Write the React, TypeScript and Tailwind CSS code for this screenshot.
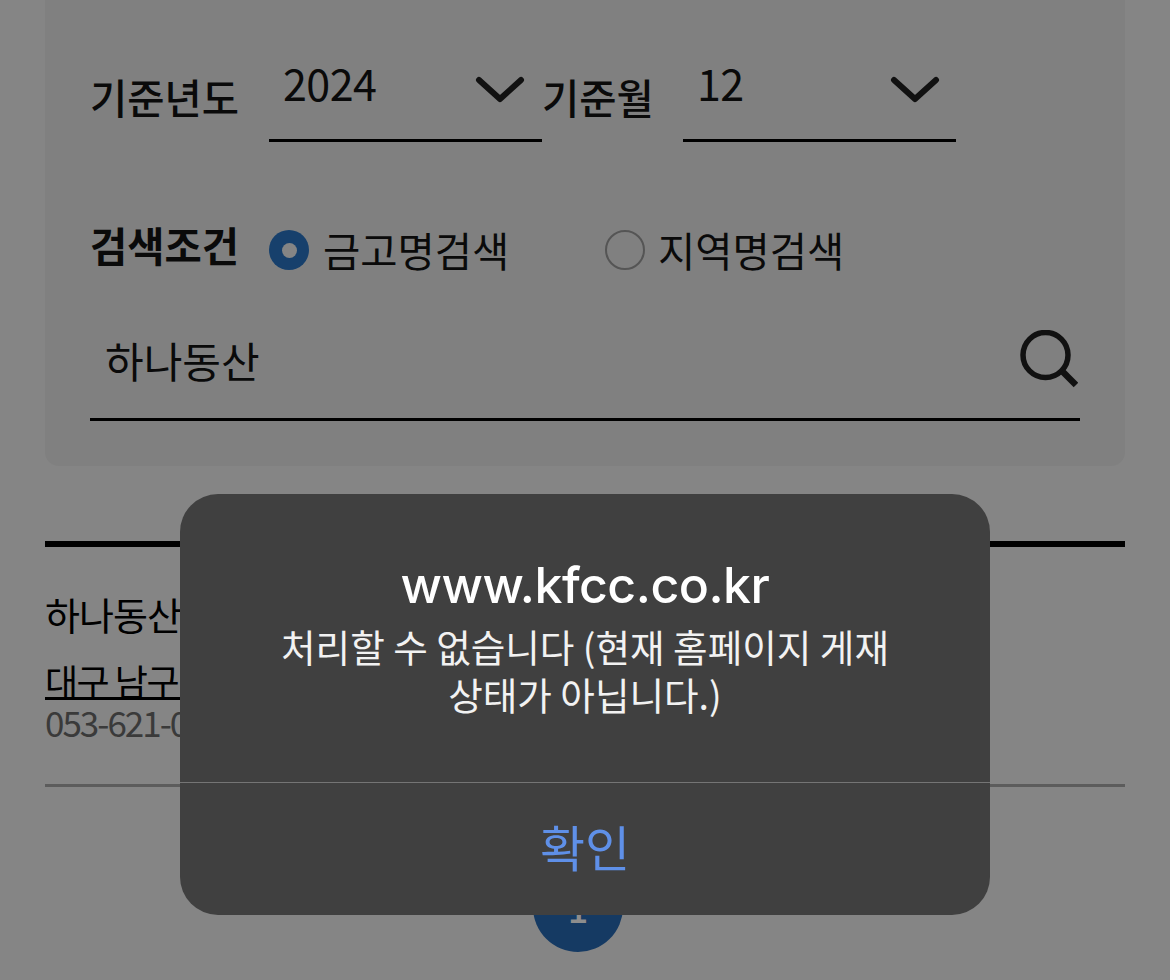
export default function App() {
  const font = { fontFamily: '"Noto Sans CJK KR", "Noto Sans", sans-serif' };
  return (
    <div style={font} className="relative h-[980px] w-[1170px] overflow-hidden bg-[#858585] px-[45px] text-[#0a0a0a]">
      <div className="h-[466px] rounded-b-[14px] bg-[#808080] px-[45px] pt-[50px]">
        <div className="flex h-[92px] items-start">
          <div className="w-[179px] text-[40.5px] font-medium leading-[94px]">기준년도</div>
          <div className="flex h-[92px] w-[273px] items-start justify-between border-b-[3px] border-black pl-[14px] pr-[17px]">
            <span className="text-[43px] leading-[64px] tracking-[-0.5px]">2024</span>
            <svg width="50" height="28" viewBox="0 0 50 28" fill="none" className="mt-[26px]">
              <path d="M4 4 L25 23 L46 4" stroke="#111" strokeWidth="6" strokeLinecap="round" strokeLinejoin="round" />
            </svg>
          </div>
          <div className="w-[141px] text-[40.5px] font-medium leading-[94px]">기준월</div>
          <div className="flex h-[92px] w-[273px] items-start justify-between border-b-[3px] border-black pl-[14px] pr-[16px]">
            <span className="text-[43px] leading-[64px] tracking-[-0.5px]">12</span>
            <svg width="50" height="28" viewBox="0 0 50 28" fill="none" className="mt-[26px]">
              <path d="M4 4 L25 23 L46 4" stroke="#111" strokeWidth="6" strokeLinecap="round" strokeLinejoin="round" />
            </svg>
          </div>
        </div>
        <div className="mt-[73px] flex h-[65px] items-start">
          <div className="w-[179px] text-[40.5px] font-bold leading-[60px]">검색조건</div>
          <div className="mt-[5px] flex h-[60px] items-center">
            <div className="flex w-[336px] items-center gap-[14px]">
              <span className="flex h-[40px] w-[40px] items-center justify-center rounded-full bg-[#17406c]">
                <span className="h-[15px] w-[15px] rounded-full bg-[#858585]" />
              </span>
              <span className="text-[40.5px] leading-[60px]">금고명검색</span>
            </div>
            <div className="flex items-center gap-[13px]">
              <span className="h-[40px] w-[40px] rounded-full border-2 border-[#555]" />
              <span className="text-[40.5px] leading-[60px]">지역명검색</span>
            </div>
          </div>
        </div>
        <div className="flex h-[141px] items-start justify-between border-b-[3px] border-black pl-[15px] pr-[2px] pt-[45px]">
          <span className="text-[42px] leading-[70px]">하나동산</span>
          <svg width="58" height="58" viewBox="0 0 58 58" fill="none" className="mt-[5px]">
            <circle cx="25.5" cy="25" r="22.5" stroke="#111" strokeWidth="5.5" />
            <path d="M42 41 L56 55" stroke="#111" strokeWidth="6.5" />
          </svg>
        </div>
      </div>

      <div className="mt-[75px] h-[6px] bg-black" />
      <div className="h-[240px] border-b-[3px] border-[#5c5c5c] pt-[39px]">
        <div className="whitespace-nowrap text-[38px] leading-[56px] tracking-[-1px] text-black">하나동산</div>
        <div className="mt-[8px] h-[50px] w-[200px] whitespace-nowrap border-b-[3px] border-black text-[36px] leading-[60px] tracking-[-1.5px] text-black">대구 남구</div>
        <div className="whitespace-nowrap text-[35px] leading-[44px] tracking-[-2px] text-[#3a3a3a]">053-621-0</div>
      </div>
      <div className="mt-[75px] flex justify-center pr-[14px]">
        <div className="flex h-[90px] w-[90px] items-center justify-center rounded-full bg-[#153a63] text-[36px] font-medium text-[#8d8d8d]">1</div>
      </div>

      <div className="absolute left-[180px] top-[494px] flex h-[421px] w-[810px] flex-col rounded-[38px] bg-[#404040] text-center">
        <div className="h-[289px] border-b border-[#757575] px-[60px] pt-[60px]">
          <div style={{ fontFamily: 'Inter, "Noto Sans CJK KR", sans-serif' }} className="text-[50px] font-medium leading-[62px] tracking-[-0.5px] text-white">www.kfcc.co.kr</div>
          <div className="mt-[6px] text-[37.6px] leading-[48px] text-[#f2f2f2]">
            처리할 수 없습니다 (현재 홈페이지 게재
            <br />
            상태가 아닙니다.)
          </div>
        </div>
        <div className="flex flex-1 items-start justify-center pt-[28px] text-[49px] leading-[70px] text-[#5f90e8]">확인</div>
      </div>
    </div>
  );
}
